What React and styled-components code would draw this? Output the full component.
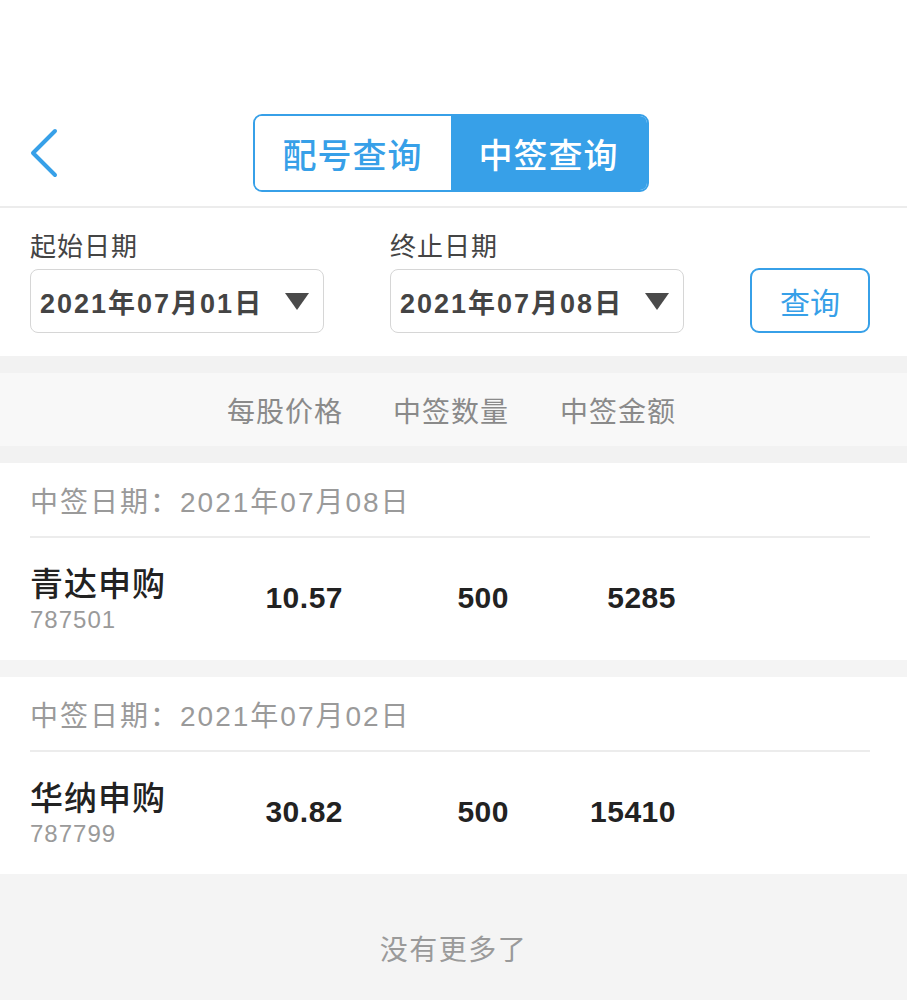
import React, { useState } from "react";
import styled, { createGlobalStyle } from "styled-components";

const FONT = `"Liberation Sans", "Noto Sans CJK SC", sans-serif`;
const BLUE = "#37a0e8";

const GlobalStyle = createGlobalStyle`
  html, body {
    margin: 0;
    padding: 0;
    background: #fff;
    font-family: ${FONT};
  }
  * { box-sizing: border-box; }
`;

const records = [
  { date: "2021年07月08日", name: "青达申购", code: "787501", price: "10.57", qty: "500", amount: "5285" },
  { date: "2021年07月02日", name: "华纳申购", code: "787799", price: "30.82", qty: "500", amount: "15410" },
];

function App() {
  const [tab, setTab] = useState("win");
  return (
    <Page>
      <GlobalStyle />
      <NavBar>
        <BackButton aria-label="back">
          <svg width="32" height="50" viewBox="0 0 32 50">
            <path d="M27 3 L5 25 L27 47" fill="none" stroke={BLUE} strokeWidth="4" strokeLinecap="round" strokeLinejoin="round" />
          </svg>
        </BackButton>
        <Segment>
          <SegButton $active={tab === "match"} onClick={() => setTab("match")}>配号查询</SegButton>
          <SegButton $active={tab === "win"} onClick={() => setTab("win")}>中签查询</SegButton>
        </Segment>
      </NavBar>

      <Filter>
        <Field>
          <FieldLabel>起始日期</FieldLabel>
          <Picker>
            2021年07月01日
            <Caret />
          </Picker>
        </Field>
        <Field>
          <FieldLabel>终止日期</FieldLabel>
          <Picker>
            2021年07月08日
            <Caret />
          </Picker>
        </Field>
        <QueryButton>查询</QueryButton>
      </Filter>

      <HeadBand>
        <ColumnRow>
          <span />
          <HeadCell>每股价格</HeadCell>
          <HeadCell>中签数量</HeadCell>
          <HeadCell>中签金额</HeadCell>
        </ColumnRow>
      </HeadBand>

      {records.map((r) => (
        <Card key={r.code}>
          <CardDate>中签日期：{r.date}</CardDate>
          <ColumnRow $item>
            <NameCell>
              <StockName>{r.name}</StockName>
              <StockCode>{r.code}</StockCode>
            </NameCell>
            <ValueCell>{r.price}</ValueCell>
            <ValueCell>{r.qty}</ValueCell>
            <ValueCell>{r.amount}</ValueCell>
          </ColumnRow>
        </Card>
      ))}

      <Footer>没有更多了</Footer>
    </Page>
  );
}

export default App;

const Page = styled.div`
  width: 907px;
  min-height: 1000px;
  background: #f4f4f4;
  display: flex;
  flex-direction: column;
`;

const NavBar = styled.div`
  background: #fff;
  height: 208px;
  padding-top: 114px;
  border-bottom: 2px solid #ececec;
  display: flex;
  justify-content: center;
  align-items: flex-start;
  position: relative;
`;

const BackButton = styled.button`
  position: absolute;
  left: 28px;
  top: 128px;
  border: none;
  background: none;
  padding: 0;
  cursor: pointer;
  display: flex;
`;

const Segment = styled.div`
  display: flex;
  width: 396px;
  height: 78px;
  border: 2px solid ${BLUE};
  border-radius: 9px;
  overflow: hidden;
  margin-right: 6px;
`;

const SegButton = styled.button`
  flex: 1;
  border: none;
  margin: 0;
  padding: 0;
  font-family: ${FONT};
  font-size: 34px;
  font-weight: 500;
  letter-spacing: 1px;
  background: ${(p) => (p.$active ? BLUE : "#fff")};
  color: ${(p) => (p.$active ? "#fff" : BLUE)};
  cursor: pointer;
`;

const Filter = styled.div`
  background: #fff;
  display: flex;
  align-items: flex-end;
  padding: 22px 37px 23px 30px;
  gap: 66px;
`;

const Field = styled.div`
  display: flex;
  flex-direction: column;
  gap: 5px;
`;

const FieldLabel = styled.div`
  font-size: 26px;
  color: #444;
  line-height: 34px;
  letter-spacing: 1px;
`;

const Picker = styled.div`
  width: 294px;
  height: 64px;
  border: 1.5px solid #d6d6d6;
  border-radius: 8px;
  display: flex;
  align-items: center;
  justify-content: space-between;
  padding: 0 12px 0 9px;
  font-size: 27px;
  font-weight: bold;
  letter-spacing: 2px;
  color: #444;
`;

const Caret = styled.span`
  width: 0;
  height: 0;
  border-left: 12px solid transparent;
  border-right: 12px solid transparent;
  border-top: 17px solid #4a4a4a;
  margin-right: 2px;
`;

const QueryButton = styled.button`
  margin-left: auto;
  width: 122px;
  height: 65px;
  border: 2px solid ${BLUE};
  border-radius: 9px;
  background: #fff;
  color: ${BLUE};
  font-family: ${FONT};
  font-size: 30px;
  padding: 0;
  cursor: pointer;
`;

const HeadBand = styled.div`
  padding: 17px 0;
  background: #f2f2f2;
`;

const ColumnRow = styled.div`
  display: grid;
  grid-template-columns: 147px 166px 166px 167px;
  align-items: center;
  padding-left: 30px;
  background: ${(p) => (p.$item ? "#fff" : "#f8f8f8")};
  height: ${(p) => (p.$item ? "122px" : "73px")};
`;

const HeadCell = styled.div`
  text-align: right;
  font-size: 28px;
  color: #8a8a8a;
  letter-spacing: 1px;
`;

const Card = styled.div`
  background: #fff;
  margin-bottom: 17px;
`;

const CardDate = styled.div`
  margin: 0 37px 0 30px;
  height: 75px;
  display: flex;
  align-items: center;
  border-bottom: 2px solid #ececec;
  font-size: 28px;
  letter-spacing: 2px;
  color: #9a9a9a;
`;

const NameCell = styled.div`
  display: flex;
  flex-direction: column;
  white-space: nowrap;
`;

const StockName = styled.div`
  font-size: 33px;
  font-weight: 500;
  letter-spacing: 1px;
  color: #222;
  line-height: 42px;
`;

const StockCode = styled.div`
  font-size: 24px;
  letter-spacing: 1px;
  color: #9a9a9a;
  line-height: 28px;
`;

const ValueCell = styled.div`
  text-align: right;
  font-size: 30px;
  font-weight: bold;
  letter-spacing: 0.5px;
  color: #222;
  padding-bottom: 2px;
`;

const Footer = styled.div`
  flex: 1;
  background: #f4f4f4;
  text-align: center;
  padding-top: 40px;
  font-size: 28px;
  line-height: 40px;
  color: #9a9a9a;
  letter-spacing: 1.5px;
`;
